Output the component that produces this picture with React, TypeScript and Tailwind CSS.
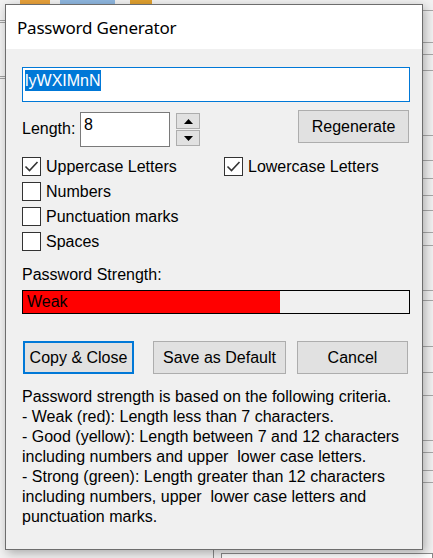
import React from "react";

const body = { fontFamily: '"Liberation Sans", Arial, sans-serif' };

type CheckProps = { label: string; checked?: boolean };

const Check: React.FC<CheckProps> = ({ label, checked }) => {
  return (
    <div className="flex h-[19px] items-center">
      <span className="flex h-[19px] w-[19px] items-center justify-center border border-[#333333] bg-white">
        {checked && (
          <svg width="15" height="15" viewBox="0 0 15 15">
            <path d="M1.5 7.5 L5.5 11.5 L13.5 3" fill="none" stroke="#333333" strokeWidth="1.6" />
          </svg>
        )}
      </span>
      <span className="ml-[5px] text-[16px] leading-[20px] text-black">{label}</span>
    </div>
  );
};

const Btn: React.FC<{ label: string; className: string }> = ({ label, className }) => {
  return (
    <button
      className={`flex h-[33px] items-center justify-center bg-[#e1e1e1] text-[16px] leading-[20px] text-black ${className}`}
    >
      {label}
    </button>
  );
};

export default function App() {
  return (
    <div className="relative h-[558px] w-[433px] overflow-hidden bg-[#f2f2f2]" style={body}>
      {/* desktop behind the dialog */}
      <div className="absolute left-0 top-[20px] h-[3px] w-[6px] border-y border-[#a0a0a0]" />
      <div className="absolute left-0 top-[76px] h-[3px] w-[6px] border-y border-[#a0a0a0]" />
      <div className="absolute left-[20px] top-0 h-[4px] w-[30px] bg-[#e9a23b]" />
      <div className="absolute left-[60px] top-0 h-[4px] w-[55px] bg-[#8fb7e0]" />
      <div className="absolute left-[130px] top-0 h-[4px] w-[22px] bg-[#e0a030]" />
      <div className="absolute left-[213px] top-[550px] h-[8px] w-px bg-[#8a8a8a]" />
      <div className="absolute left-[221px] top-[553px] h-[8px] w-[212px] border border-[#8a8a8a] bg-white" />
      {[10, 42, 54, 70, 135, 160, 178, 195, 210, 232, 245, 290, 300, 346, 372, 395, 440, 452, 470, 482].map((y) => (
        <div key={y} className="absolute left-[423px] h-px w-[10px] bg-[#a8a8a8]" style={{ top: y }} />
      ))}

      <div className="relative ml-[5px] mt-[4px] flex h-[546px] w-[418px] flex-col border border-[#6d6d6d] bg-[#f0f0f0] shadow-[2px_3px_10px_rgba(0,0,0,0.3)]">
        <div className="h-[44px] bg-white pl-[11px] pt-[11px]">
          <span
            className="text-[17px] leading-[24px] tracking-[-0.2px] text-black"
            style={{ fontFamily: '"Noto Sans", "Open Sans", sans-serif' }}
          >
            Password Generator
          </span>
        </div>

        <div className="flex flex-col pl-[16px] pr-[12px]">
          <div className="mt-[18px] h-[35px] w-[388px] border border-[#0078d7] bg-white pl-[2px] pt-[1px]">
            <span className="inline-block bg-[#0078d7] text-[16px] leading-[21px] text-white">lyWXIMnN</span>
          </div>

          <div className="mt-[8px] flex items-start">
            <span className="mt-[9px] w-[58px] text-[16px] leading-[20px] text-black">Length:</span>
            <div className="mt-[2px] h-[35px] w-[90px] border border-[#7a7a7a] bg-white pl-[3px] pt-[2px] text-[16px] leading-[20px] text-black">
              8
            </div>
            <div className="ml-[6px] mt-[3px] flex flex-col gap-[1px]">
              <div className="flex h-[16px] w-[24px] items-center justify-center border border-[#adadad] bg-[#e1e1e1]">
                <svg width="9" height="5" viewBox="0 0 9 5">
                  <path d="M0 5 L4.5 0 L9 5 Z" fill="#000" />
                </svg>
              </div>
              <div className="flex h-[16px] w-[24px] items-center justify-center border border-[#adadad] bg-[#e1e1e1]">
                <svg width="9" height="5" viewBox="0 0 9 5">
                  <path d="M0 0 L9 0 L4.5 5 Z" fill="#000" />
                </svg>
              </div>
            </div>
            <Btn label="Regenerate" className="ml-auto mr-[1px] w-[111px] border border-[#adadad]" />
          </div>

          <div className="mt-[10px] grid grid-cols-[202px_1fr] gap-y-[6px]">
            <Check label="Uppercase Letters" checked />
            <Check label="Lowercase Letters" checked />
            <Check label="Numbers" />
            <div />
            <Check label="Punctuation marks" />
            <div />
            <Check label="Spaces" />
            <div />
          </div>

          <span className="mt-[14px] text-[16px] leading-[20px] text-black">Password Strength:</span>

          <div className="mt-[5px] flex h-[24px] w-[388px] border border-black bg-[#f0f0f0]">
            <div className="flex h-full w-[257px] items-center bg-[#ff0000] pl-[4px] text-[16px] leading-[20px] text-black">
              Weak
            </div>
          </div>

          <div className="mt-[27px] flex">
            <Btn label="Copy & Close" className="ml-[1px] w-[111px] border-2 border-[#0078d7]" />
            <Btn label="Save as Default" className="ml-[19px] w-[133px] border border-[#adadad]" />
            <Btn label="Cancel" className="ml-[11px] w-[111px] border border-[#adadad]" />
          </div>

          <p className="mt-[13px] whitespace-pre text-[16px] leading-[20px] text-black">
            {"Password strength is based on the following criteria.\n- Weak (red): Length less than 7 characters.\n- Good (yellow): Length between 7 and 12 characters\nincluding numbers and upper  lower case letters.\n- Strong (green): Length greater than 12 characters\nincluding numbers, upper  lower case letters and\npunctuation marks."}
          </p>
        </div>
      </div>
    </div>
  );
}
